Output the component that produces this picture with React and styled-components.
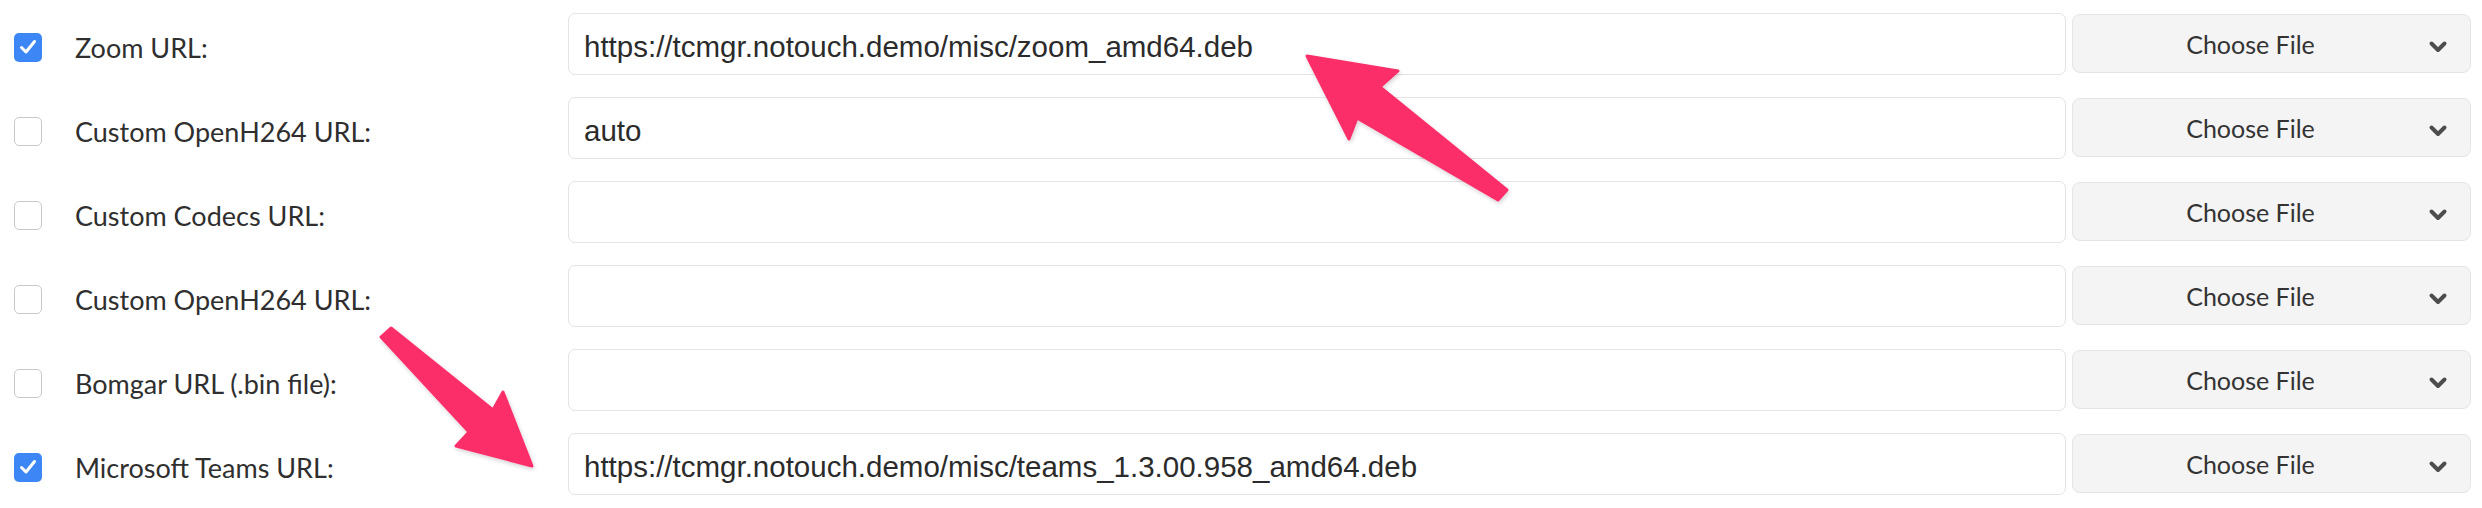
import React from 'react';
import styled, { createGlobalStyle } from 'styled-components';

const GlobalStyle = createGlobalStyle`
  html, body {
    margin: 0;
    padding: 0;
    background: #ffffff;
  }
  body {
    font-family: 'Lato', 'Noto Sans', sans-serif;
    color: #2e2e2e;
  }
`;

const rows = [
  { label: 'Zoom URL:', value: 'https://tcmgr.notouch.demo/misc/zoom_amd64.deb', checked: true },
  { label: 'Custom OpenH264 URL:', value: 'auto', checked: false },
  { label: 'Custom Codecs URL:', value: '', checked: false },
  { label: 'Custom OpenH264 URL:', value: '', checked: false },
  { label: 'Bomgar URL (.bin file):', value: '', checked: false },
  { label: 'Microsoft Teams URL:', value: 'https://tcmgr.notouch.demo/misc/teams_1.3.00.958_amd64.deb', checked: true },
];

const Page = styled.div`
  position: relative;
  width: 2482px;
  height: 508px;
  overflow: hidden;
`;

const Form = styled.div`
  display: flex;
  flex-direction: column;
  gap: 22px;
  padding: 13px 11px 0 14px;
`;

const Row = styled.div`
  display: grid;
  grid-template-columns: 548px 1498px 399px;
  column-gap: 6px;
  height: 62px;
`;

const LabelCell = styled.label`
  display: flex;
  align-items: center;
  gap: 33px;
  padding-top: 6px;
  font-size: 27px;
  color: #2f2f2f;
  white-space: nowrap;
`;

const Box = styled.span`
  flex: 0 0 auto;
  width: 28px;
  height: 29px;
  box-sizing: border-box;
  border-radius: 5px;
  display: flex;
  align-items: center;
  justify-content: center;
  background: ${(props) => (props.checked ? '#3d86f5' : '#ffffff')};
  border: ${(props) => (props.checked ? 'none' : '1.5px solid #c9c9c9')};
`;

const Input = styled.div`
  box-sizing: border-box;
  height: 62px;
  border: 1.5px solid #e3e3e3;
  border-radius: 7px;
  background: #ffffff;
  padding: 5px 0 0 15px;
  display: flex;
  align-items: center;
  font-family: 'Liberation Sans', Arial, sans-serif;
  font-size: 29.5px;
  color: #2b2b2b;
  white-space: nowrap;
  overflow: hidden;
`;

const FileButton = styled.div`
  box-sizing: border-box;
  margin-top: 1px;
  height: 59px;
  border: 1.5px solid #e4e4e4;
  border-radius: 8px;
  background: #f4f4f4;
  display: flex;
  align-items: center;
  padding: 0 22px 0 0;
  font-size: 25px;
  color: #333333;
`;

const FileText = styled.span`
  flex: 1;
  text-align: center;
`;

const Chevron = styled.svg`
  flex: 0 0 auto;
  width: 20px;
  height: 14px;
  margin-top: 6px;
`;

const Overlay = styled.svg`
  position: absolute;
  left: 0;
  top: 0;
  width: 2482px;
  height: 508px;
  pointer-events: none;
`;

const Check = () => (
  <svg width="18" height="16" viewBox="0 0 18 16">
    <path d="M2.5 8.5 L7 13 L15.5 2.5" fill="none" stroke="#fff" strokeWidth="3" strokeLinecap="round" strokeLinejoin="round" />
  </svg>
);

const ARROW = '#fc2e6b';

const App = () => {
  return (
    <Page>
      <GlobalStyle />
      <Form>
        {rows.map((row, idx) => (
          <Row key={idx}>
            <LabelCell>
              <Box checked={row.checked}>{row.checked && <Check />}</Box>
              {row.label}
            </LabelCell>
            <Input>{row.value}</Input>
            <FileButton>
              <FileText>Choose File</FileText>
              <Chevron viewBox="0 0 20 14">
                <path d="M3.5 3.5 L10 10 L16.5 3.5" fill="none" stroke="#4d4d4d" strokeWidth="4" strokeLinecap="round" strokeLinejoin="round" />
              </Chevron>
            </FileButton>
          </Row>
        ))}
      </Form>
      <Overlay viewBox="0 0 2482 508">
        <defs>
          <filter id="shadow" x="-20%" y="-20%" width="140%" height="140%">
            <feDropShadow dx="1" dy="2" stdDeviation="2" floodColor="#000" floodOpacity="0.18" />
          </filter>
        </defs>
        <polygon
          points="1307,56 1398,71 1380,87 1507,190 1498,200 1357,118 1349,139"
          fill={ARROW}
          stroke={ARROW}
          strokeWidth="3"
          strokeLinejoin="round"
          filter="url(#shadow)"
        />
        <polygon
          points="391,328 493,410 503,392 532,466 456,446 469,432 381,337"
          fill={ARROW}
          stroke={ARROW}
          strokeWidth="3"
          strokeLinejoin="round"
          filter="url(#shadow)"
        />
      </Overlay>
    </Page>
  );
};

export default App;
